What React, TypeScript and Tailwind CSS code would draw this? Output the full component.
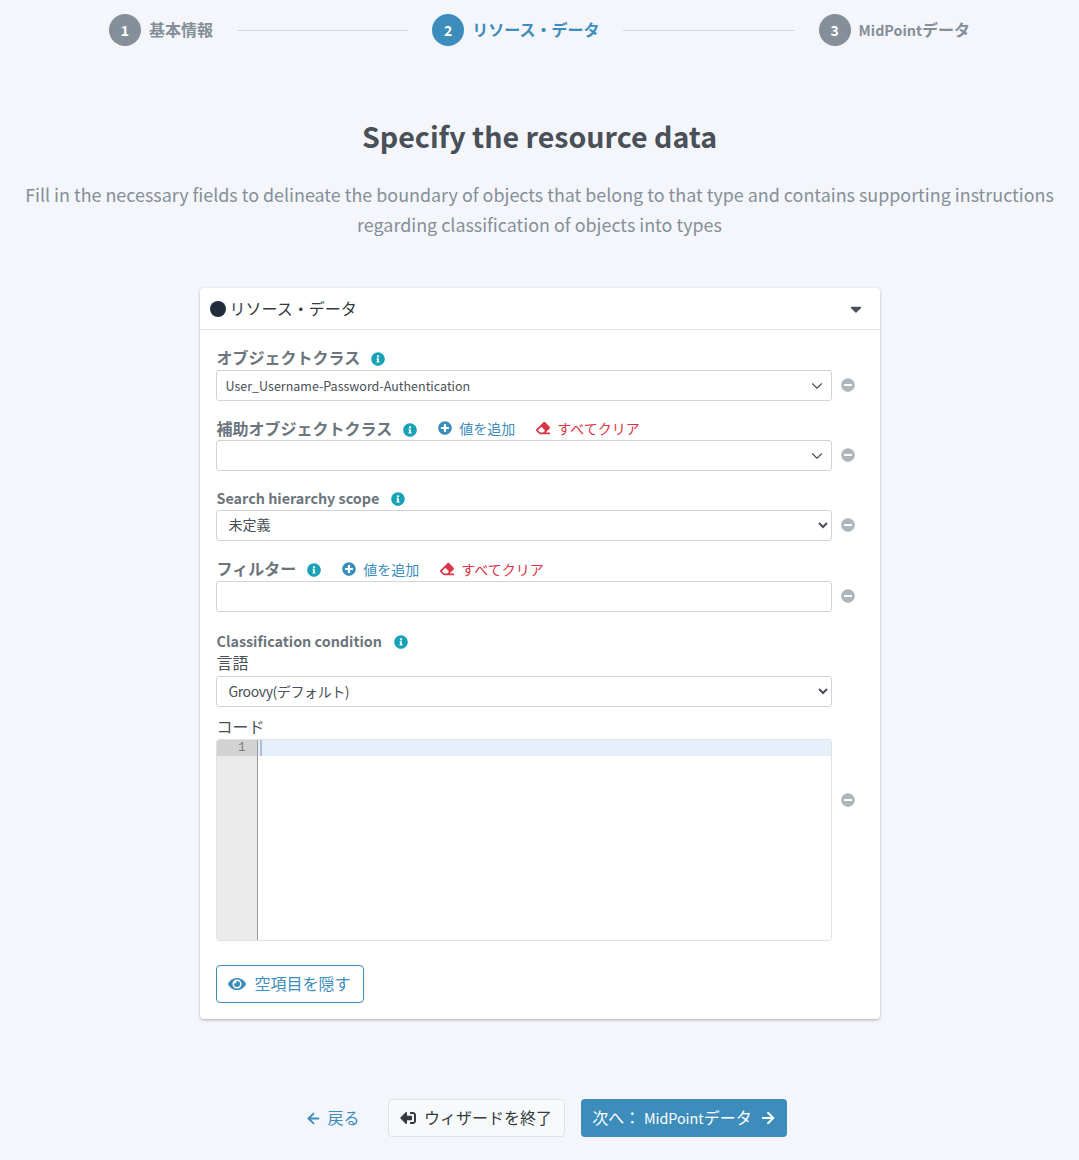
import { FaInfoCircle, FaPlusCircle, FaEraser, FaMinusCircle, FaEye, FaSignOutAlt, FaCaretDown } from 'react-icons/fa'
import { LuChevronDown, LuArrowLeft, LuArrowRight } from 'react-icons/lu'
import type { ReactNode } from 'react'

const Step = ({ n, label, active }: { n: number; label: ReactNode; active?: boolean }) => (
  <div className="flex items-center gap-2 shrink-0">
    <div className={`w-8 h-8 rounded-full flex items-center justify-center text-white text-[14px] font-bold ${active ? 'bg-[#3c8dbc]' : 'bg-[#858f99]'}`}>
      {n}
    </div>
    <span className={`text-[16px] font-bold pb-[2px] ${active ? 'text-[#3c8dbc]' : 'text-[#858f99]'}`}>{label}</span>
  </div>
)

const Info = ({ className = '' }: { className?: string }) => <FaInfoCircle className={`text-[#17a2b8] text-[14px] shrink-0 ${className}`} />

const Actions = ({ className = '' }: { className?: string }) => (
  <div className={`flex items-center text-[14px] leading-[20px] pb-[3px] ${className}`}>
    <span className="flex items-center gap-[7px] text-[#3c8dbc]">
      <FaPlusCircle className="text-[14px]" />
      値を追加
    </span>
    <span className="flex items-center gap-[7px] text-[#dc3545] ml-[21px]">
      <FaEraser className="text-[14px]" />
      すべてクリア
    </span>
  </div>
)

const Row = ({ children, minusTop }: { children: ReactNode; minusTop: string }) => (
  <div className="flex">
    <div className="w-[616px]">{children}</div>
    <div className={`w-8 flex items-center pl-[9px] ${minusTop}`}>
      <FaMinusCircle className="text-[#adb5bd] text-[14px]" />
    </div>
  </div>
)

const FakeSelect = ({ value }: { value?: string }) => (
  <div className="h-[31px] border border-[#ced4da] rounded-[3px] bg-white flex items-center justify-between pl-[9px] pr-[5px] text-[12.5px] text-[#495057]">
    <span className="pt-px">{value}</span>
    <LuChevronDown className="text-[#495057] text-[18px]" strokeWidth={1.5} />
  </div>
)

const NativeSelect = ({ value, className = '' }: { value: string; className?: string }) => (
  <select defaultValue={value} className={`block w-full h-[31px] border border-[#ced4da] rounded-[3px] bg-white pl-2 text-[14px] text-[#495057] ${className}`}>
    <option>{value}</option>
  </select>
)

export default function App() {
  return (
    <div className="min-h-[1160px] bg-[#f4f6fb] font-['Noto_Sans_CJK_JP',sans-serif] text-[#495057]">
      <div className="flex items-center px-[109px] pt-[14px]">
        <Step n={1} label="基本情報" />
        <div className="flex-1 h-px bg-[#d5d9e0] mx-6" />
        <Step n={2} label="リソース・データ" active />
        <div className="flex-1 h-px bg-[#d5d9e0] mx-6" />
        <Step n={3} label={<><span className="text-[14.3px]">MidPoint</span>データ</>} />
      </div>

      <h1 className="mt-[67px] text-center text-[28.6px] leading-[46px] font-bold text-[#495057]">Specify the resource data</h1>
      <p className="mt-[20px] mx-auto w-[1040px] text-center text-[17.9px] leading-[30px] text-[#858f99]">
        Fill in the necessary fields to delineate the boundary of objects that belong to that type and contains supporting instructions regarding classification of objects into types
      </p>

      <div className="mt-[49px] mx-auto w-[680px] h-[731px] bg-white rounded-[4px] shadow-[0_1px_3px_rgba(0,0,0,0.3)]">
        <div className="h-[42px] border-b border-[#dee2e6] flex items-center justify-between pl-[10px] pr-[15px]">
          <div className="flex items-center gap-[4px] text-[16px] text-[#343a40]">
            <span className="w-4 h-4 rounded-full bg-[#1f2d3d]" />
            <span className="pb-[2px]">リソース・データ</span>
          </div>
          <FaCaretDown className="text-[#495057] text-[18px]" />
        </div>

        <div className="pl-4 pt-[19px]">
          <Row minusTop="pt-[19px]">
            <div className="flex items-center h-[21px]">
              <span className="pl-px text-[16px] font-bold text-[#6c757d] pb-[5px]">オブジェクトクラス</span>
              <Info className="ml-[11px] mb-[2px]" />
            </div>
            <FakeSelect value="User_Username-Password-Authentication" />
          </Row>

          <div className="mt-[18px]">
            <Row minusTop="pt-[19px]">
              <div className="flex items-center h-[21px]">
                <span className="pl-px text-[16px] font-bold text-[#6c757d] pb-[4px]">補助オブジェクトクラス</span>
                <Info className="ml-[11px]" />
                <Actions className="ml-[21px]" />
              </div>
              <FakeSelect />
            </Row>
          </div>

          <div className="mt-[18px]">
            <Row minusTop="pt-[19px]">
              <div className="flex items-center h-[21px]">
                <span className="pl-px text-[14.35px] font-bold text-[#6c757d] pb-[4px]">Search hierarchy scope</span>
                <Info className="ml-[12px] mb-[2px]" />
              </div>
              <NativeSelect value="未定義" className="pb-[3px]" />
            </Row>
          </div>

          <div className="mt-[19px]">
            <Row minusTop="pt-[19px]">
              <div className="flex items-center h-[21px]">
                <span className="pl-px text-[16px] font-bold text-[#6c757d] pb-[5px]">フィルター</span>
                <Info className="ml-[11px] mb-[2px]" />
                <Actions className="ml-[21px]" />
              </div>
              <div className="h-[31px] border border-[#ced4da] rounded-[3px] bg-white" />
            </Row>
          </div>

          <div className="mt-[19px]">
            <Row minusTop="pt-[27px]">
              <div className="flex items-center h-[21px]">
                <span className="pl-px text-[14.35px] font-bold text-[#6c757d] pb-[2px]">Classification condition</span>
                <Info className="ml-[12px]" />
              </div>
              <div className="pl-px text-[16px] leading-[21px] text-[#495057] mb-[3px]">言語</div>
              <NativeSelect value="Groovy(デフォルト)" className="tracking-[-0.4px] pb-[2px]" />
              <div className="pl-px text-[16px] leading-[21px] text-[#495057] mt-[9px] mb-[2px]">コード</div>
              <div className="h-[202px] border border-[#dee2e6] rounded-[3px] bg-white flex overflow-hidden">
                <div className="w-[41px] bg-[#ebebeb] border-r border-[#9a9a9a]">
                  <div className="h-4 bg-[#d2d2d2] text-right pr-[11px] text-[12px] leading-4 text-[#777] font-['Liberation_Mono',monospace]">1</div>
                </div>
                <div className="flex-1">
                  <div className="h-4 bg-[#e6f0fb] pl-[2px]">
                    <div className="w-[2px] h-4 bg-[#aebfd4]" />
                  </div>
                </div>
              </div>
            </Row>
          </div>

          <button className="mt-6 w-[148px] h-[38px] border border-[#3c8dbc] rounded-[4px] flex items-center justify-center gap-2 text-[16px] text-[#3c8dbc] bg-white">
            <FaEye className="text-[18px]" />
            <span className="pb-[2px]">空項目を隠す</span>
          </button>
        </div>
      </div>

      <div className="mt-[80px] flex justify-center items-center">
        <button className="flex items-center gap-[5px] text-[16px] text-[#3c8dbc] h-[38px] pl-[13px] pr-[10px] mr-[18px]">
          <LuArrowLeft className="text-[17px]" strokeWidth={2.5} />
          <span className="pb-[2px]">戻る</span>
        </button>
        <button className="flex items-center gap-[8px] h-[38px] w-[177px] justify-center border border-[#dee2e6] rounded-[4px] bg-[#f8f9fa] text-[16px] text-[#343a40]">
          <FaSignOutAlt className="text-[16px] -scale-x-100" />
          <span className="pb-[2px]">ウィザードを終了</span>
        </button>
        <button className="ml-4 flex items-center gap-[7px] h-[38px] w-[206px] justify-center pl-[2px] rounded-[4px] bg-[#3c8dbc] text-[16px] text-white">
          <span className="pb-[2px]">次へ： <span className="text-[14.3px]">MidPoint</span>データ</span>
          <LuArrowRight className="text-[18px]" strokeWidth={2.5} />
        </button>
      </div>
    </div>
  )
}
